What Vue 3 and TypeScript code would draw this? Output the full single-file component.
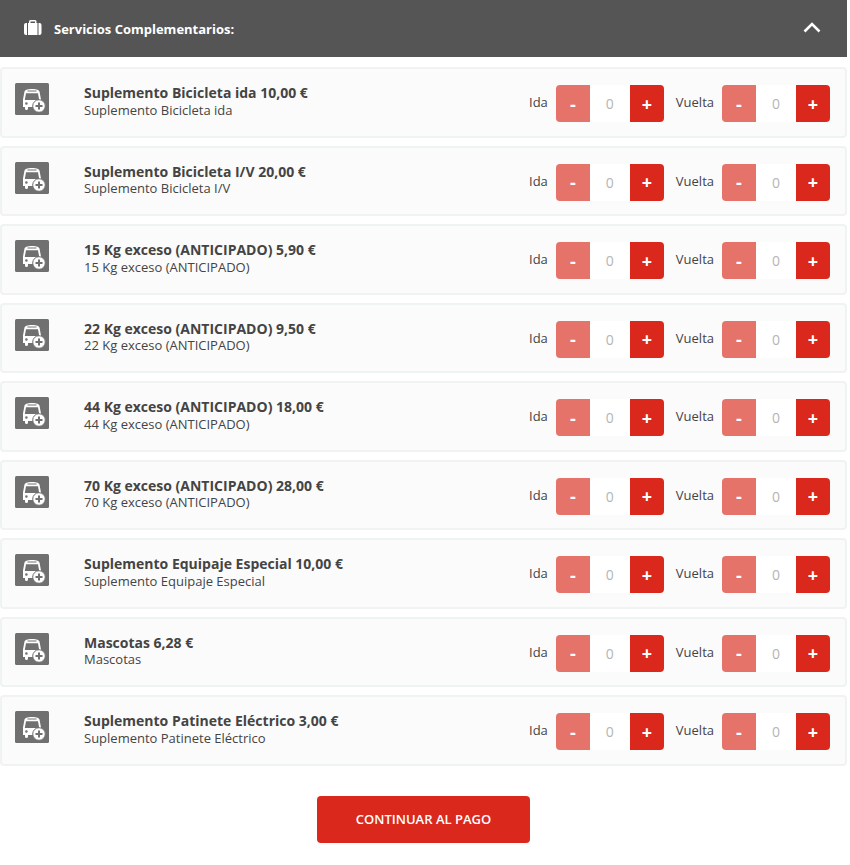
<script setup lang="ts">
import { ref, reactive } from 'vue'

interface Extra {
  name: string
  price: string
  ida: number
  vuelta: number
}

type Leg = 'ida' | 'vuelta'

const legs: { key: Leg; label: string }[] = [
  { key: 'ida', label: 'Ida' },
  { key: 'vuelta', label: 'Vuelta' },
]

const make = (name: string, price: string): Extra => ({ name, price, ida: 0, vuelta: 0 })

const extras = reactive<Extra[]>([
  make('Suplemento Bicicleta ida', '10,00 €'),
  make('Suplemento Bicicleta I/V', '20,00 €'),
  make('15 Kg exceso (ANTICIPADO)', '5,90 €'),
  make('22 Kg exceso (ANTICIPADO)', '9,50 €'),
  make('44 Kg exceso (ANTICIPADO)', '18,00 €'),
  make('70 Kg exceso (ANTICIPADO)', '28,00 €'),
  make('Suplemento Equipaje Especial', '10,00 €'),
  make('Mascotas', '6,28 €'),
  make('Suplemento Patinete Eléctrico', '3,00 €'),
])

const open = ref(true)
</script>

<template>
  <main class="page">
    <button class="header" type="button" :aria-expanded="open" @click="open = !open">
      <svg class="case" viewBox="0 0 18 16" aria-hidden="true">
        <path d="M2 3H3V15H2A2 2 0 0 1 0 13V5A2 2 0 0 1 2 3ZM14.500 3H15.500A2 2 0 0 1 17.500 5V13A2 2 0 0 1 15.500 15H14.500ZM4 3H5V1.500A1.500 1.500 0 0 1 6.500 0H11A1.500 1.500 0 0 1 12.500 1.500V3H13.500V15H4ZM6.500 3H11V1.500H6.500Z" />
      </svg>
      <span class="heading">Servicios Complementarios:</span>
      <svg class="chevron" :class="{ closed: !open }" viewBox="0 0 18 12" aria-hidden="true">
        <path d="M1.500 9.500L9 2L16.500 9.500" />
      </svg>
    </button>

    <ul v-if="open" class="list">
      <li v-for="(extra, i) in extras" :key="extra.name" class="card">
        <svg class="bus" viewBox="0 0 34 32" aria-hidden="true">
          <rect class="tile" width="34" height="32" rx="1.500" />
          <path
            class="body"
            fill-rule="evenodd"
            d="M8 24V16.500L9.400 9C9.700 7 12 6 17 6S24.300 7 24.600 9L26 16.500V24H13V25.500A1.500 1.500 0 0 1 10 25.500V24ZM12.500 7.600V8.600H21.500V7.600ZM11 10.200L9.800 17H24.200L23 10.200ZM11.400 19.200A1.300 1.300 0 1 0 11.400 21.800A1.300 1.300 0 1 0 11.400 19.200Z"
          />
          <circle class="ring" cx="24" cy="23" r="6.300" />
          <path class="plus" d="M24 19.500V26.500M20.500 23H27.500" />
        </svg>
        <div class="info">
          <h2 class="title">{{ extra.name }} {{ extra.price }}</h2>
          <p class="detail">{{ extra.name }}</p>
        </div>
        <div class="legs">
          <div v-for="leg in legs" :key="leg.key" class="leg">
            <label class="label" :for="`${leg.key}-${i}`">{{ leg.label }}</label>
            <div class="stepper">
              <button
                class="step minus"
                type="button"
                :disabled="extra[leg.key] === 0"
                @click="extra[leg.key]--"
              >-</button>
              <input :id="`${leg.key}-${i}`" class="count" type="text" readonly :value="extra[leg.key]" />
              <button class="step add" type="button" @click="extra[leg.key]++">+</button>
            </div>
          </div>
        </div>
      </li>
    </ul>

    <div class="actions">
      <button class="pay" type="button">CONTINUAR AL PAGO</button>
    </div>
  </main>
</template>

<style>
body {
  background: #fff;
}
</style>

<style scoped>
.page {
  margin-right: 3px;
  font-family: 'Open Sans', 'Noto Sans', sans-serif;
  font-size: 13px;
  color: #444;
}

button,
input {
  font-family: inherit;
  border: 0;
  margin: 0;
}

button {
  cursor: pointer;
}

.header {
  display: flex;
  align-items: center;
  width: 100%;
  height: 57px;
  padding: 0 26px 1px 24px;
  background: #555;
  color: #fff;
  text-align: left;
}

.case {
  width: 18px;
  height: 16px;
  fill: #fff;
}

.heading {
  flex: 1;
  margin-left: 12px;
  padding-top: 2px;
  font-size: 13px;
  font-weight: 700;
}

.chevron {
  width: 18px;
  height: 12px;
  fill: none;
  stroke: #fff;
  stroke-width: 2.6;
}

.chevron.closed {
  transform: rotate(180deg);
}

.list {
  display: grid;
  gap: 8px;
  margin: 10px 0 0;
  padding: 0;
  list-style: none;
}

.card {
  display: flex;
  align-items: flex-start;
  padding: 14px 15px 17px 13px;
  border: 2px solid #eff4f3;
  border-radius: 4px;
  background: #fbfbfb;
}

.bus {
  flex: none;
  width: 34px;
  height: 32px;
}

.tile {
  fill: #707070;
}

.body {
  fill: #fff;
}

.ring {
  fill: #fff;
  stroke: #707070;
  stroke-width: 1;
}

.plus {
  stroke: #707070;
  stroke-width: 2;
}

.info {
  flex: 1;
  margin-left: 35px;
  padding-top: 1px;
}

.title {
  margin: 0;
  font-size: 14px;
  font-weight: 700;
  line-height: 1.25;
}

.detail {
  margin: 0;
  line-height: 17px;
}

.legs {
  display: flex;
  gap: 12px;
  height: 35px;
}

.leg {
  display: flex;
  align-items: flex-start;
  gap: 8px;
}

.label {
  margin-top: 10px;
  line-height: 18px;
}

.stepper {
  display: flex;
  height: 37px;
  margin-top: 2px;
  border-radius: 4px;
  overflow: hidden;
}

.step {
  width: 34px;
  padding: 0;
  background: #da291c;
  color: #fff;
  font-size: 18px;
  font-weight: 700;
}

.step:disabled {
  background: #e6736a;
  cursor: default;
}

.count {
  box-sizing: border-box;
  width: 40px;
  padding: 0;
  background: #fff;
  color: #b5b5b5;
  font-size: 14px;
  text-align: center;
}

.actions {
  display: flex;
  justify-content: center;
  padding: 30px 0 22px;
}

.pay {
  height: 47px;
  padding: 0 39px;
  border-radius: 4px;
  background: #da291c;
  color: #fff;
  font-size: 13px;
  font-weight: 600;
}
</style>
